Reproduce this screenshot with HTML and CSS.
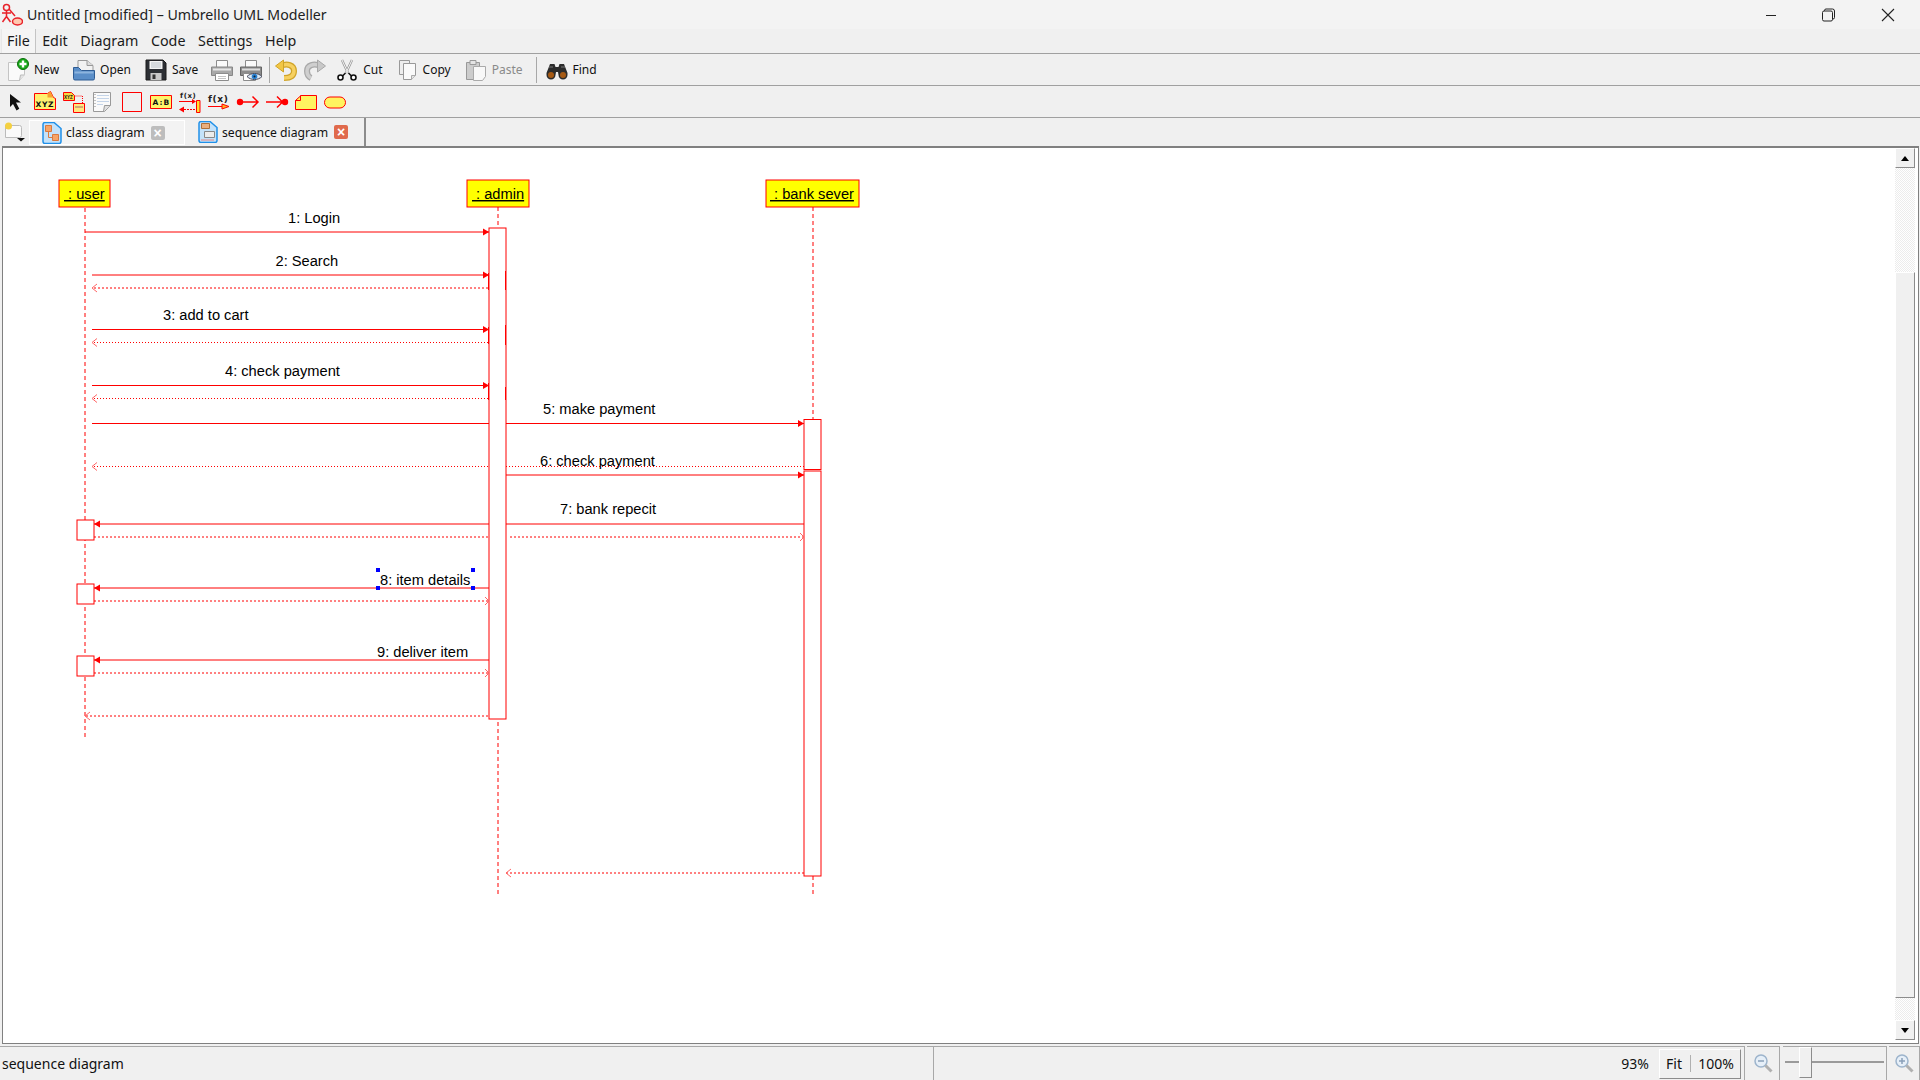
FILE: index.html
```html
<!DOCTYPE html>
<html lang="en">
<head>
<meta charset="utf-8">
<title>Untitled [modified] – Umbrello UML Modeller</title>
<link rel="stylesheet" href="styles.css">
</head>
<body>
<div class="app">
  <header class="titlebar">
    <svg class="app-icon" width="22" height="24" viewBox="0 0 22 24"><g fill="none" stroke="#e8222a" stroke-width="1.500"><circle cx="5.500" cy="4.500" r="3"/><path d="M5.500 7.500v6M1 10h9M5.500 13.500L1.500 19M5.500 13.500l4 5.500M8 6l6 7"/><ellipse cx="16.500" cy="18.500" rx="5" ry="3.500" fill="#ffc8b0"/></g></svg>
    <span class="title-text">Untitled [modified] – Umbrello UML Modeller</span>
    <div class="winctl">
      <svg class="win-btn" width="58" height="28" viewBox="0 0 58 28"><path d="M23 14.500h10" stroke="#222" fill="none"/></svg>
      <svg class="win-btn" width="58" height="28" viewBox="0 0 58 28"><path d="M21.500 11.500a1.500 1.500 0 0 1 1.500-1.500h7a1.500 1.500 0 0 1 1.500 1.500v7a1.500 1.500 0 0 1-1.500 1.500h-7a1.500 1.500 0 0 1-1.500-1.500zM23.500 10V9.500a1.500 1.500 0 0 1 1.500-1.500h6.500a2 2 0 0 1 2 2v6.500a1.500 1.500 0 0 1-1.500 1.500h-.5" stroke="#222" fill="none"/></svg>
      <svg class="win-btn" width="58" height="28" viewBox="0 0 58 28"><path d="M23 8l12 12M35 8L23 20" stroke="#222" fill="none" stroke-width="1.100"/></svg>
    </div>
  </header>

  <nav class="menubar">
    <span class="menu menu-on">File</span><span class="menu">Edit</span><span class="menu">Diagram</span><span class="menu">Code</span><span class="menu">Settings</span><span class="menu">Help</span>
  </nav>

  <div class="toolbar main-tools">
    <div class="tool t-new"><svg width="22" height="24" viewBox="0 0 22 24"><path d="M1.500 4.500h12l4 3v9l-5 6h-11z" fill="#fafafa" stroke="#c4c4c4"/><path d="M12.500 22.500l1-5.500h4" fill="#e4e4e4" stroke="#bbb"/><circle cx="16" cy="6" r="5.500" fill="#18a818" stroke="#0c700c"/><path d="M16 2.500v7M12.500 6h7" stroke="#fff" stroke-width="2.400"/></svg><span>New</span></div>
    <div class="tool t-open"><svg width="22" height="22" viewBox="0 0 22 22"><path d="M5 1.500h9l6 5v8H5z" fill="#f2f2f2" stroke="#999"/><path d="M14 1.500v5h6" fill="#ddd" stroke="#999"/><path d="M.5 8.500h5l3 3h13v8a1.500 1.500 0 0 1-1.500 1.500H2a1.500 1.500 0 0 1-1.500-1.500z" fill="#5a8ec8" stroke="#2e5c94"/><path d="M1.500 12.500h19v2h-19z" fill="#8db4de"/></svg><span>Open</span></div>
    <div class="tool t-save"><svg width="22" height="22" viewBox="0 0 22 22"><path d="M1 1h17l3 3v17H1z" fill="#2c2f34" stroke="#1a1a1a"/><path d="M4.500 2h13v8h-13z" fill="#f4f4f4"/><path d="M6 4h10M6 6h10M6 8h10" stroke="#b8c0c8"/><path d="M5.500 14h11v7h-11z" fill="#c8c8c8"/><path d="M7.500 15.500h3v4.500h-3z" fill="#333"/></svg><span>Save</span></div>
    <svg class="ticon t-print" width="22" height="22" viewBox="0 0 22 22"><path d="M5.500 1.500h11v7h-11z" fill="#fafafa" stroke="#8c8c8c"/><path d="M.5 8h21v8.500H.5z" fill="#a8a8a8" stroke="#888"/><path d="M2 10.500h18" stroke="#e6e6e6" stroke-width="2"/><path d="M4.500 14.500h13v7h-13z" fill="#fff" stroke="#8c8c8c"/><path d="M7 17.500h8M7 19.500h8" stroke="#c4c4c4"/></svg>
    <svg class="ticon" width="22" height="22" viewBox="0 0 22 22"><path d="M5.500 1.500h11v7h-11z" fill="#fafafa" stroke="#8c8c8c"/><path d="M.5 8h21v8.500H.5z" fill="#8c8c8c" stroke="#666"/><path d="M2 10.500h18" stroke="#ddd" stroke-width="2"/><path d="M3.500 14.500h12v7h-12z" fill="#fff" stroke="#8c8c8c"/><path d="M7 17.500c4-4 11-4 15 0-4 4-11 4-15 0z" fill="#dbe8f4" stroke="#445"/><circle cx="14.500" cy="17.500" r="2.800" fill="#2a80d0"/><circle cx="14.500" cy="17.500" r="1" fill="#123"/></svg>
    <i class="tsep sep-a"></i>
    <svg class="ticon t-undo" width="22" height="22" viewBox="0 0 22 22"><path d="M6 7c6-3 13-1 13 5s-5 7-10 7" fill="none" stroke="#d0a428" stroke-width="6"/><path d="M6 7c6-3 13-1 13 5s-5 7-10 7" fill="none" stroke="#f6d060" stroke-width="3.500"/><path d="M.5 7L8.500 1v12z" fill="#f2c644" stroke="#d0a428"/></svg>
    <svg class="ticon" width="22" height="22" viewBox="0 0 22 22"><path d="M16 7C10 4 3 6 3 12c0 4 2 6 4 7" fill="none" stroke="#a8a8a8" stroke-width="6"/><path d="M16 7C10 4 3 6 3 12c0 4 2 6 4 7" fill="none" stroke="#cfcfcf" stroke-width="3.500"/><path d="M21.500 7l-8-6v12z" fill="#c8c8c8" stroke="#a8a8a8"/></svg>
    <div class="tool t-cut"><svg width="22" height="22" viewBox="0 0 22 22"><path d="M6 1l6 13M16 1l-6 13" stroke="#999" stroke-width="2.400" fill="none"/><path d="M6 1l6 13M16 1l-6 13" stroke="#f4f4f4" fill="none"/><path d="M9.500 14L6.500 17M12.500 14l3 3" stroke="#111" stroke-width="1.500"/><circle cx="4.500" cy="18.500" r="2.500" fill="#fff" stroke="#111" stroke-width="1.600"/><circle cx="17.500" cy="18.500" r="2.500" fill="#fff" stroke="#111" stroke-width="1.600"/></svg><span>Cut</span></div>
    <div class="tool t-copy"><svg width="22" height="22" viewBox="0 0 22 22"><path d="M2.500 1.500h10v14h-10z" fill="#eee" stroke="#999"/><path d="M6.500 4.500h12v12l-4 4h-8z" fill="#fafafa" stroke="#999"/><path d="M14.500 20.500v-4h4" fill="#e4e4e4" stroke="#aaa"/></svg><span>Copy</span></div>
    <div class="tool t-paste off"><svg width="22" height="22" viewBox="0 0 22 22"><path d="M1.500 3.500h13v17h-13z" fill="#ccc" stroke="#999"/><path d="M5 1.500h6v4H5z" fill="#e4e4e4" stroke="#999"/><path d="M8.500 7.500h12v10l-3 4h-9z" fill="#f8f8f8" stroke="#aaa"/></svg><span>Paste</span></div>
    <i class="tsep sep-b"></i>
    <div class="tool t-find"><svg width="22" height="22" viewBox="0 0 22 22"><path d="M4 5h4.500l1 3h3l1-3H18l3.500 9v2a4.500 4.500 0 0 1-9 0l-.5-3h-2l-.5 3a4.500 4.500 0 0 1-9 0v-2z" fill="#2c2c2c"/><circle cx="5" cy="16" r="3" fill="#a65a14"/><circle cx="17" cy="16" r="3" fill="#a65a14"/><path d="M3 8h4M15 8h4" stroke="#777"/></svg><span>Find</span></div>
  </div>

  <div class="toolbar shape-tools">
    <svg class="sicon" viewBox="0 0 22 22"><path d="M5 3v13l3-3 3.500 6.500 2.800-1.700-3.300-6.300h5z" fill="#111"/></svg>
    <svg class="sicon" viewBox="0 0 22 22"><path d="M.5 2.500h13l3-2 3 6 2 1v11H.5z" fill="#fff070" stroke="#f00"/><path d="M13.500 2.500l3-2 3 6h-6z" fill="#f8a030"/><text class="ico-t" x="1.500" y="16">XYZ</text></svg>
    <svg class="sicon" viewBox="0 0 22 22"><path d="M.5 1.500h8l3 3v5H.5z" fill="#f8d840" stroke="#f00"/><text class="ico-s" x="1" y="8">XYZ</text><path d="M11.500 5h8v7" fill="none" stroke="#f00" stroke-dasharray="1 1"/><path d="M10.500 12.500h11v9h-11z" fill="#ffe880" stroke="#f00"/><path d="M12 16h8" stroke="#a66"/></svg>
    <svg class="sicon" viewBox="0 0 22 22"><path d="M1.500 1.500h17v13l-6 6h-11z" fill="#fafafa" stroke="#999"/><path d="M11.500 20.500l1-6h6" fill="#e0e0e0" stroke="#999"/><path d="M5 4.500h12M5 7.500h12M5 10.500h12M5 13.500h6" stroke="#c4d4e8"/><path d="M3 3v15" stroke="#888" stroke-dasharray="1 2"/></svg>
    <svg class="sicon" viewBox="0 0 22 22"><path d="M1.500 1.500h19v19h-19z" fill="none" stroke="#f00"/></svg>
    <svg class="sicon" viewBox="0 0 22 22"><path d="M.5 4.500h21v13H.5z" fill="#fff46a" stroke="#f00"/><text class="ico-t ab" x="2.500" y="14">A:B</text></svg>
    <svg class="sicon" viewBox="0 0 22 22"><text class="ico-f" x="1" y="7">f(x)</text><path d="M0 10.500h16" stroke="#f00"/><path d="M13 8l4 2.500-4 2.500z" fill="#f00"/><path d="M17.500 9.500h3.500v12h-3.500z" fill="#ffe030" stroke="#f00"/><path d="M5 18.500h11" stroke="#f00" stroke-dasharray="2 1"/><path d="M0 18.500l5-3v6z" fill="#f00"/></svg>
    <svg class="sicon" viewBox="0 0 22 22"><text class="ico-g" x="0" y="11">f(x)</text><path d="M0 15.500h15" stroke="#f00"/><path d="M14 13l7 2.500-7 2.500z" fill="#ffb020" stroke="#f00"/></svg>
    <svg class="sicon" viewBox="0 0 22 22"><circle cx="3" cy="11" r="3.200" fill="#f00"/><path d="M3 11h18M15.500 5.500l5.500 5.500-5.500 5.500" fill="none" stroke="#f00" stroke-width="1.500"/></svg>
    <svg class="sicon" viewBox="0 0 22 22"><circle cx="19" cy="11" r="3.200" fill="#f00"/><path d="M0 11h18M11 5.500l5.500 5.500-5.500 5.500" fill="none" stroke="#f00" stroke-width="1.500"/></svg>
    <svg class="sicon" viewBox="0 0 22 22"><path d="M.5 9.500v9h21v-14H6z" fill="#fff460" stroke="#f00"/><path d="M.5 9.500h5v-5" fill="none" stroke="#f00"/></svg>
    <svg class="sicon" viewBox="0 0 22 22"><rect x=".5" y="6" width="21" height="11" rx="5.500" fill="#fff460" stroke="#f00"/></svg>
  </div>

  <div class="tabbar">
    <svg class="corner" width="22" height="22" viewBox="0 0 22 22"><path d="M1.500 4.500h14a2 2 0 0 1 2 2v8a2 2 0 0 1-2 2h-14z" fill="#fafafa" stroke="#bbb"/><circle cx="4.500" cy="5" r="3.500" fill="#f4d040"/><path d="M13 17h8l-4 3.500z" fill="#111"/></svg>
    <div class="tab tab-first">
      <svg width="20" height="22" viewBox="0 0 20 22"><path d="M1 2.500a2 2 0 0 1 2-2h9l7 6v13a2 2 0 0 1-2 2H3a2 2 0 0 1-2-2z" fill="#c4e2fa" stroke="#2090e8" stroke-width="1.500"/><path d="M3.500 3.500h6v6h-6zM10.500 12.500h6v6h-6z" fill="#f6a468" stroke="#d87a40"/><path d="M6.500 9.500v6h4" stroke="#d87a40" fill="none"/></svg>
      <span class="tab-label">class diagram</span>
      <i class="close close-off">×</i>
    </div>
    <div class="tab tab-second">
      <svg width="20" height="22" viewBox="0 0 20 22"><path d="M1 2.500a2 2 0 0 1 2-2h9l7 6v13a2 2 0 0 1-2 2H3a2 2 0 0 1-2-2z" fill="#c4e2fa" stroke="#2090e8" stroke-width="1.500"/><path d="M3.500 2.500h8v5h-8z" fill="#eab080" stroke="#b0703a"/><path d="M6.500 10.500h10v6h-10z" fill="#ececec" stroke="#888"/><path d="M3 19h13" stroke="#e08888"/></svg>
      <span class="tab-label">sequence diagram</span>
      <i class="close close-on">×</i>
    </div>
  </div>

  <main class="workspace">
    <div class="canvas">
      <svg class="diagram" viewBox="3 148 1892 896" preserveAspectRatio="xMinYMin meet">
        <g class="life">
          <path d="M85 208V737"/><path d="M498 207V228"/><path d="M498 722V894"/><path d="M813 207V419"/><path d="M813 876V895"/>
        </g>

        <g class="act">
          <rect x="489" y="228" width="17" height="491"/>
          <rect x="804" y="419.500" width="17" height="50" class="thin"/>
          <rect x="804" y="471" width="17" height="405"/>
          <rect x="77" y="520" width="17" height="20"/>
          <rect x="77" y="584" width="17" height="20"/>
          <rect x="77" y="656" width="17" height="20"/>
        </g>
        <path class="act-mark" d="M488.500 273V290M488.500 327V344M488.500 383V400M505.500 271V290M505.500 325V345M505.500 387V400"/>

        <g class="obj">
          <rect x="59" y="180" width="51" height="27"/>
          <rect x="467" y="180" width="62" height="27"/>
          <rect x="766" y="180" width="93" height="27"/>
        </g>
        <text class="lbl under" x="64" y="199"> : user</text>
        <text class="lbl under" x="472" y="199"> : admin</text>
        <text class="lbl under" x="770" y="199"> : bank sever</text>

        <g class="msg">
          <path d="M85 232H489"/><path d="M92 275H489"/>
          <path d="M94 524H489M506 524H804"/>
          <path d="M94 588H489"/><path d="M94 660H489"/>
          <path d="M506 475H804"/>
        </g>
        <g class="msg-thin">
          <path d="M92 329.500H489"/><path d="M92 385.500H489"/><path d="M92 423.500H489M506 423.500H804"/>
        </g>
        <g class="ret">
          <path d="M94 288H489"/><path d="M94 537H489M510 537H804"/><path d="M94 601H489"/><path d="M94 673H489"/><path d="M86 716H489"/><path d="M506 873H804"/>
        </g>
        <g class="ret-thin">
          <path d="M94 342.500H489"/><path d="M94 398.500H489"/><path d="M94 466.500H489M506 466.500H804"/>
        </g>
        <g class="head">
          <path d="M483 228.500l6 3.500-6 3.500z"/><path d="M483 271.500l6 3.500-6 3.500z"/><path d="M483 326l6 3.500-6 3.500z"/><path d="M483 382l6 3.500-6 3.500z"/>
          <path d="M798 420l6 3.500-6 3.500z"/><path d="M798 471.500l6 3.500-6 3.500z"/>
          <path d="M100 520.500l-6 3.500 6 3.500z"/><path d="M100 584.500l-6 3.500 6 3.500z"/><path d="M100 656.500l-6 3.500 6 3.500z"/>
        </g>
        <g class="open">
          <path d="M97 284l-5 4 5 4"/><path d="M97 338.500l-5 4 5 4"/><path d="M97 394.500l-5 4 5 4"/><path d="M97 462.500l-5 4 5 4"/>
          <path d="M800 533l4 4-4 4"/><path d="M485 597l4 4-4 4"/><path d="M485 669l4 4-4 4"/>
          <path d="M90 712l-5 4 5 4"/><path d="M511 869l-5 4 5 4"/>
        </g>

        <text class="lbl" x="288" y="223">1: Login</text>
        <text class="lbl" x="275.500" y="266">2: Search</text>
        <text class="lbl" x="163" y="320">3: add to cart</text>
        <text class="lbl" x="225" y="376">4: check payment</text>
        <text class="lbl" x="543" y="414">5: make payment</text>
        <text class="lbl" x="540" y="466">6: check payment</text>
        <text class="lbl" x="560" y="514">7: bank repecit</text>
        <text class="lbl" x="380" y="585">8: item details</text>
        <text class="lbl" x="377" y="657">9: deliver item</text>

        <g class="handle">
          <rect x="376" y="568" width="4" height="4"/><rect x="471" y="568" width="4" height="4"/><rect x="376" y="586" width="4" height="4"/><rect x="471" y="586" width="4" height="4"/>
        </g>
      </svg>
      <div class="scrollbar">
        <div class="sb-btn"><i class="tri-up"></i></div>
        <div class="sb-track sb-upper"></div>
        <div class="sb-thumb"></div>
        <div class="sb-track sb-lower"></div>
        <div class="sb-btn"><i class="tri-down"></i></div>
      </div>
    </div>
  </main>

  <footer class="statusbar">
    <div class="st-left">sequence diagram</div>
    <div class="st-mid"><span class="zoom-val">93%</span>
      <div class="fit-box"><span>Fit</span><i></i><span>100%</span></div>
    </div>
    <div class="st-cell st-out"><svg width="22" height="24" viewBox="0 0 22 24"><circle cx="9" cy="9" r="6" fill="#e6eff8" stroke="#9db4cc" stroke-width="1.500"/><path d="M6 9h6" stroke="#8aa0b8" stroke-width="1.500"/><path d="M13.500 13.500l6 6" stroke="#b0b0b0" stroke-width="3"/></svg></div>
    <div class="st-cell st-slider"><i class="sl-line"></i><i class="sl-knob"></i></div>
    <div class="st-cell st-in"><svg width="22" height="24" viewBox="0 0 22 24"><circle cx="9" cy="9" r="6" fill="#e6eff8" stroke="#9db4cc" stroke-width="1.500"/><path d="M6 9h6M9 6v6" stroke="#8aa0b8" stroke-width="1.500"/><path d="M13.500 13.500l6 6" stroke="#b0b0b0" stroke-width="3"/></svg></div>
  </footer>
</div>
</body>
</html>
```

FILE: styles.css
```css
* { box-sizing: border-box; }
html, body { margin: 0; height: 100%; overflow: hidden; }
body { background: #f0f0f0; color: #111; font-family: "Noto Sans", "Open Sans", sans-serif; }
.app { display: flex; flex-direction: column; height: 1080px; width: 1920px; }

.titlebar { height: 29px; flex: none; background: #f3f3f3; display: flex; align-items: center; padding-left: 1px; font-size: 14.200px; color: #222; }
.app-icon { flex: none; }
.title-text { margin-left: 4px; }
.winctl { margin-left: auto; display: flex; margin-right: 3px; }
.win-btn { display: block; }

.menubar { height: 25px; flex: none; display: flex; align-items: center; border-bottom: 1px solid #a0a0a0; font-size: 14.300px; padding-left: 1px; }
.menu { height: 24px; line-height: 24px; padding: 0 6.300px; color: #1a1a1a; }
.menu-on { background: #f5f5f5; border-right: 1px solid #c4c4c4; border-left: 1px solid #e8e8e8; padding: 0 5px; }

.toolbar { height: 32px; flex: none; display: flex; align-items: center; border-bottom: 1px solid #a0a0a0; }
.main-tools { padding-left: 7px; font-size: 12px; }
.tool { display: flex; align-items: center; gap: 5px; color: #111; }
.tool svg, .ticon { flex: none; }
.t-open { margin-left: 14px; }
.t-save { margin-left: 14px; }
.t-print { margin-left: 13px; }
.ticon + .ticon { margin-left: 7px; }
.tsep { width: 1px; height: 26px; background: #a8a8a8; flex: none; }
.sep-a { margin-left: 7px; }
.t-undo { margin-left: 5px; }
.t-cut { margin-left: 10px; }
.t-copy { margin-left: 14px; gap: 4px; }
.t-paste { margin-left: 14px; }
.off { color: #8a8a8a; }
.sep-b { margin-left: 13px; }
.t-find { margin-left: 9px; }

.shape-tools { padding-left: 5px; gap: 7px; }
.sicon { width: 22px; height: 22px; flex: none; overflow: visible; }
.ico-t { font: bold 7.500px "DejaVu Sans", sans-serif; fill: #111; letter-spacing: .6px; }
.ab { letter-spacing: 1px; }
.ico-s { font: bold 4.500px "Liberation Sans", sans-serif; fill: #111; }
.ico-f { font: bold 7px "DejaVu Sans", sans-serif; fill: #222; letter-spacing: .6px; }
.ico-g { font: bold 9px "DejaVu Sans", sans-serif; fill: #222; letter-spacing: .6px; }

.tabbar { height: 28px; flex: none; display: flex; align-items: stretch; padding-left: 4px; }
.corner { align-self: center; flex: none; }
.tab { display: flex; align-items: center; font-size: 12.200px; color: #111; }
.tab-first { width: 156px; margin: 2px 0 1px 3px; padding-left: 12px; background: #f3f3f3; border: 1px solid #fff; }
.tab-second { width: 181px; padding-left: 13px; border-right: 2px solid #8c8c8c; }
.tab-label { margin-left: 4px; white-space: nowrap; }
.close { font: bold 14px/14px "Liberation Sans", sans-serif; width: 14px; height: 14px; text-align: center; color: #fff; border-radius: 2px; }
.close-off { background: #bdbdbd; margin-left: 6px; }
.close-on { background: #e06a4c; margin-left: 6px; }

.workspace { flex: 1; min-height: 0; padding: 0 1px 0 2px; background: #f0f0f0; }
.canvas { height: 898px; background: #fff; border: 1px solid #808080; border-top-width: 2px; display: flex; padding-right: 2px; }
.diagram { flex: none; width: 1892px; height: 896px; display: block; }
.scrollbar { flex: none; width: 20px; height: 892px; display: flex; flex-direction: column; background: #f0f0f0; }
.sb-btn { height: 20px; flex: none; background: #f0f0f0; border: 1px solid; border-color: #fff #8c8c8c #8c8c8c #fff; display: flex; align-items: center; justify-content: center; }
.tri-up { border: 4.500px solid transparent; border-top: 0; border-bottom: 5px solid #000; }
.tri-down { border: 4.500px solid transparent; border-bottom: 0; border-top: 5px solid #000; }
.sb-track { background-color: #fff; background-image: conic-gradient(#ececec 25%, #fff 0 50%, #ececec 0 75%, #fff 0); background-size: 2px 2px; }
.sb-upper { height: 104px; flex: none; }
.sb-lower { flex: 1; }
.sb-thumb { height: 726px; flex: none; background: #f0f0f0; border: 1px solid; border-color: #fff #8c8c8c #8c8c8c #fff; }

.life path { fill: none; stroke: #f00; stroke-dasharray: 4 3; }
.act rect { fill: #fff; stroke: #f00; }
.act-mark { fill: none; stroke: #f00; }
.obj rect { fill: #ff0; stroke: #f00; }
.msg path { fill: none; stroke: #f00; }
.msg-thin path { fill: none; stroke: #f00; }
.ret path { fill: none; stroke: #f00; stroke-dasharray: 2 2; }
.ret-thin path { fill: none; stroke: #f00; stroke-dasharray: 1 2; }
.head path { fill: #f00; }
.open path { fill: none; stroke: #f66; }
.lbl { font: 14.670px "Liberation Sans", sans-serif; fill: #000; white-space: pre; }
.under { text-decoration: underline; }
.handle rect { fill: #00f; }

.statusbar { height: 35px; flex: none; display: flex; font-size: 14px; color: #111; background: #f0f0f0; padding-top: 1px; }
.st-left { width: 934px; flex: none; padding-left: 2px; line-height: 33px; border-right: 1px solid #a8a8a8; border-top: 1px solid #a8a8a8; }
.st-mid { flex: none; width: 811px; display: flex; align-items: center; justify-content: flex-end; border-top: 1px solid #a8a8a8; border-right: 1px solid #a8a8a8; padding-right: 3px; }
.zoom-val { margin-right: 10px; }
.fit-box { width: 82px; height: 30px; display: flex; align-items: center; justify-content: space-between; padding: 0 6px; border: 1px solid; border-color: #fff #8c8c8c #8c8c8c #fff; }
.fit-box i { width: 1px; height: 17px; background: #b0b0b0; }
.st-cell { flex: none; border-top: 1px solid #a8a8a8; border-right: 1px solid #a8a8a8; display: flex; align-items: center; justify-content: center; position: relative; margin-left: 2px; }
.st-out { width: 33px; }
.st-slider { width: 104px; margin-left: 3px; }
.st-in { flex: 1; }
.sl-line { position: absolute; left: 2px; right: 2px; top: 14px; height: 2px; background: #9a9a9a; }
.sl-knob { position: absolute; left: 16px; top: 0; bottom: 2px; width: 13px; background: #f0f0f0; border: 1px solid; border-color: #fff #8c8c8c #8c8c8c #fff; }
```
